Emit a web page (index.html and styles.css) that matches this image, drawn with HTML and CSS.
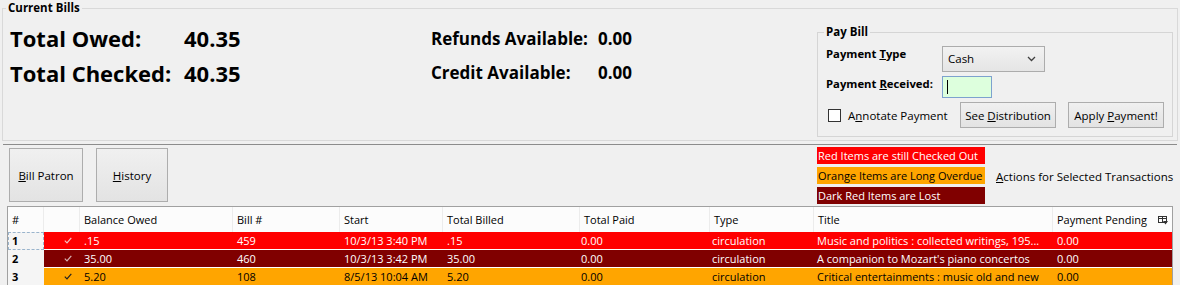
FILE: index.html
```html
<!DOCTYPE html>
<html>
<head>
<meta charset="utf-8">
<title>Current Bills</title>
<link rel="stylesheet" href="styles.css">
</head>
<body>
<fieldset class="current">
  <legend class="group-title current-title">Current Bills</legend>
  <div class="summary">
    <div class="totals">
      <div class="tot-row"><span class="tot-label">Total Owed:</span><span>40.35</span></div>
      <div class="tot-row"><span class="tot-label">Total Checked:</span><span>40.35</span></div>
    </div>
    <div class="avail">
      <div class="av-row"><span class="av-label">Refunds Available:</span><span>0.00</span></div>
      <div class="av-row"><span class="av-label">Credit Available:</span><span>0.00</span></div>
    </div>
    <fieldset class="paybill">
      <legend class="group-title pay-title">Pay Bill</legend>
      <div class="pay-grid">
        <label class="pay-label pay-label-type">Payment <u>T</u>ype</label>
        <div class="select">
          <span>Cash</span>
          <svg class="chev" width="9" height="6" viewBox="0 0 9 6"><polyline points="1,1 4.5,4.5 8,1" fill="none" stroke="#404040" stroke-width="1.3"/></svg>
        </div>
        <label class="pay-label pay-label-recv">Payment <u>R</u>eceived:</label>
        <div class="input"><span class="caret"></span></div>
      </div>
      <div class="pay-actions">
        <span class="box"></span>
        <span class="check-label">A<u>n</u>notate Payment</span>
        <button class="btn btn-dist">See <u>D</u>istribution</button>
        <button class="btn btn-apply">Apply <u>P</u>ayment!</button>
      </div>
    </fieldset>
  </div>
</fieldset>
<div class="splitter"></div>
<div class="lower">
  <div class="toolbar">
    <button class="btn big btn-patron"><u>B</u>ill Patron</button>
    <button class="btn big btn-history"><u>H</u>istory</button>
    <div class="legend-area">
      <div class="legend-list">
        <div class="lg lg-red">Red Items are still Checked Out</div>
        <div class="lg lg-orange">Orange Items are Long Overdue</div>
        <div class="lg lg-lost">Dark Red Items are Lost</div>
      </div>
      <div class="actions"><u>A</u>ctions for Selected Transactions</div>
    </div>
  </div>
  <table class="grid">
    <colgroup>
      <col class="c-num"><col class="c-chk"><col class="c-bal"><col class="c-bill"><col class="c-start"><col class="c-billed"><col class="c-paid"><col class="c-type"><col class="c-title"><col class="c-pend">
    </colgroup>
    <thead>
      <tr>
        <th>#</th><th></th><th>Balance Owed</th><th>Bill #</th><th>Start</th><th>Total Billed</th><th>Total Paid</th><th>Type</th><th>Title</th>
        <th class="last"><span class="pend-head"><span>Payment Pending</span>
          <svg class="picker" width="10" height="9" viewBox="0 0 10 9"><rect x="0.5" y="0.5" width="8" height="6" fill="none" stroke="#333"/><line x1="0.5" y1="2.5" x2="8.5" y2="2.5" stroke="#333"/><line x1="4.5" y1="0.5" x2="4.5" y2="6.5" stroke="#333"/><polygon points="5,5 10,5 7.5,8.5" fill="#333"/></svg>
        </span></th>
      </tr>
    </thead>
    <tbody>
      <tr class="r-red">
        <td class="num focus">1</td><td class="chk"><svg width="8" height="7" viewBox="0 0 8 7"><polyline points="0.8,3.6 3,5.8 7.3,0.8" fill="none" stroke="currentColor" stroke-width="1.2"/></svg></td>
        <td>.15</td><td>459</td><td>10/3/13 3:40 PM</td><td>.15</td><td class="paid">0.00</td><td class="type">circulation</td><td class="title">Music and politics : collected writings, 195...</td><td class="pend">0.00</td>
      </tr>
      <tr class="r-lost">
        <td class="num">2</td><td class="chk"><svg width="8" height="7" viewBox="0 0 8 7"><polyline points="0.8,3.6 3,5.8 7.3,0.8" fill="none" stroke="currentColor" stroke-width="1.2"/></svg></td>
        <td>35.00</td><td>460</td><td>10/3/13 3:42 PM</td><td>35.00</td><td class="paid">0.00</td><td class="type">circulation</td><td class="title">A companion to Mozart's piano concertos</td><td class="pend">0.00</td>
      </tr>
      <tr class="r-orange">
        <td class="num">3</td><td class="chk"><svg width="8" height="7" viewBox="0 0 8 7"><polyline points="0.8,3.6 3,5.8 7.3,0.8" fill="none" stroke="currentColor" stroke-width="1.2"/></svg></td>
        <td>5.20</td><td>108</td><td>8/5/13 10:04 AM</td><td>5.20</td><td class="paid">0.00</td><td class="type">circulation</td><td class="title">Critical entertainments : music old and new</td><td class="pend">0.00</td>
      </tr>
    </tbody>
  </table>
</div>
</body>
</html>
```
FILE: styles.css
```css
* { box-sizing: border-box; }
html, body { margin: 0; padding: 0; background: #f0f0f0; }
body {
  font-family: "Open Sans", "Noto Sans", sans-serif;
  font-size: 11.5px;
  color: #000;
  width: 1180px;
  height: 285px;
  overflow: hidden;
}
u { text-decoration: underline; text-underline-offset: 1px; }

fieldset { margin: 0; min-width: 0; }
.group-title {
  font-weight: 700;
  font-size: 11.5px;
  line-height: 16px;
  padding: 0 2px;
}

.current {
  margin: 0 2px;
  border: 1px solid #d9d9d9;
  padding: 0 4px 3px 7px;
}
.current-title { margin-left: -4px; }

.summary { display: flex; align-items: flex-start; height: 121px; }

.totals { width: 421px; padding-top: 5px; font-size: 22px; font-weight: 700; }
.tot-row { display: flex; line-height: 35px; height: 35px; }
.tot-label { width: 174px; }

.avail { flex: 1; padding-top: 6px; font-size: 17px; font-weight: 700; }
.av-row { display: flex; line-height: 34px; height: 34px; }
.av-label { width: 167px; }

.paybill {
  width: 356px;
  margin-top: 8px;
  border: 1px solid #d5d5d5;
  padding: 6px 8px 8px 6px;
}
.pay-title { margin-left: 0; }

.pay-grid {
  display: grid;
  grid-template-columns: 116px auto;
  row-gap: 4px;
  margin-left: 2px;
  align-items: start;
}
.pay-label { font-weight: 700; font-size: 11.3px; white-space: nowrap; }
.pay-label-type { line-height: 15px; }
.pay-label-recv { line-height: 16px; }

.select {
  width: 103px;
  height: 26px;
  border: 1px solid #acacac;
  background: linear-gradient(#f2f2f2, #e5e5e5);
  display: flex;
  align-items: center;
  justify-content: space-between;
  padding: 0 8px 1px 5px;
  margin-top: 0;
}
.chev { margin-top: 1px; }

.input {
  width: 50px;
  height: 22px;
  border: 1px solid #7da2ce;
  background: #ddffdd;
  display: flex;
  align-items: center;
  padding-left: 4px;
}
.caret { width: 1px; height: 14px; background: #000; }

.pay-actions {
  display: flex;
  align-items: center;
  height: 26px;
  margin-top: 4px;
}
.box {
  width: 13px;
  height: 13px;
  border: 1px solid #333;
  background: #fff;
  margin-left: 4px;
  margin-right: 7px;
}
.check-label { white-space: nowrap; }

.btn {
  font-family: inherit;
  font-size: 11.5px;
  color: #000;
  background: linear-gradient(#f0f0f0, #e3e3e3);
  border: 1px solid #adadad;
  border-radius: 0;
  margin: 0;
  padding: 0;
  height: 26px;
  width: 96px;
  white-space: nowrap;
}
.btn-dist { margin-left: auto; }
.btn-apply { margin-left: 12px; }

.splitter {
  height: 1px;
  margin: 3px 3px 0 3px;
  background: #8c8c8c;
}

.lower { padding: 0 7px; }

.toolbar {
  display: flex;
  align-items: flex-start;
  padding-top: 2px;
  height: 59px;
}
.big { height: 54px; margin-top: 1px; }
.btn-patron { width: 74px; margin-left: 2px; }
.btn-history { width: 72px; margin-left: 13px; }

.legend-area {
  margin-left: auto;
  width: 356px;
  display: flex;
  align-items: center;
}
.legend-list { width: 168px; flex: none; display: flex; flex-direction: column; gap: 3px; }
.lg { height: 17px; line-height: 17px; padding-left: 1px; white-space: nowrap; font-size: 11px; }
.lg-red { background: #ff0000; color: #fff; }
.lg-orange { background: #ffa500; color: #000; }
.lg-lost { background: #800000; color: #fff; }
.actions { margin-left: 11px; padding-top: 2px; white-space: nowrap; }

.grid {
  margin-top: 2px;
  width: 1166px;
  table-layout: fixed;
  border-collapse: separate;
  border-spacing: 0;
  border: 1px solid #a0a0a0;
  background: #fcfcfc;
  font-size: 11px;
}
.c-num { width: 36px; }
.c-chk { width: 36px; }
.c-bal { width: 153px; }
.c-bill { width: 107px; }
.c-start { width: 103px; }
.c-billed { width: 137px; }
.c-paid { width: 130px; }
.c-type { width: 104px; }
.c-title { width: 239px; }
.c-pend { width: 119px; }

.grid th {
  height: 25px;
  font-weight: 400;
  text-align: left;
  padding: 0 0 0 4px;
  border-right: 1px solid #ececec;
  white-space: nowrap;
  overflow: hidden;
}
.grid th.last { border-right: 0; padding-right: 4px; }
.pend-head { display: flex; justify-content: space-between; align-items: center; }
.picker { margin-top: 1px; }

.grid td {
  height: 18px;
  line-height: 17px;
  padding: 0 0 0 4px;
  border-bottom: 1px solid #fff;
  white-space: nowrap;
  overflow: hidden;
  text-overflow: ellipsis;
}
.grid td.num {
  font-weight: 700;
  background: #f5f5f5;
  border-bottom-color: #f5f5f5;
}
.grid td.focus { outline: 1px dashed #9ab4cc; outline-offset: -1px; }
.grid td.chk { padding-left: 20px; }
.grid td.chk svg { display: block; }
.grid td.paid { padding-left: 1px; }
.grid td.type { padding-left: 2px; }
.grid td.title { padding-left: 3px; }
.grid td.pend { padding-left: 4px; }

.r-red td { background: #ff0000; color: #fff; }
.r-red td.chk { color: #f3c4c4; }
.r-lost td { background: #800000; color: #fff; }
.r-lost td.chk { color: #d9b3b3; }
.r-orange td { background: #ffa500; color: #000; }
.r-orange td.chk { color: #222; }
.grid tr td.num { color: #000; }
```
